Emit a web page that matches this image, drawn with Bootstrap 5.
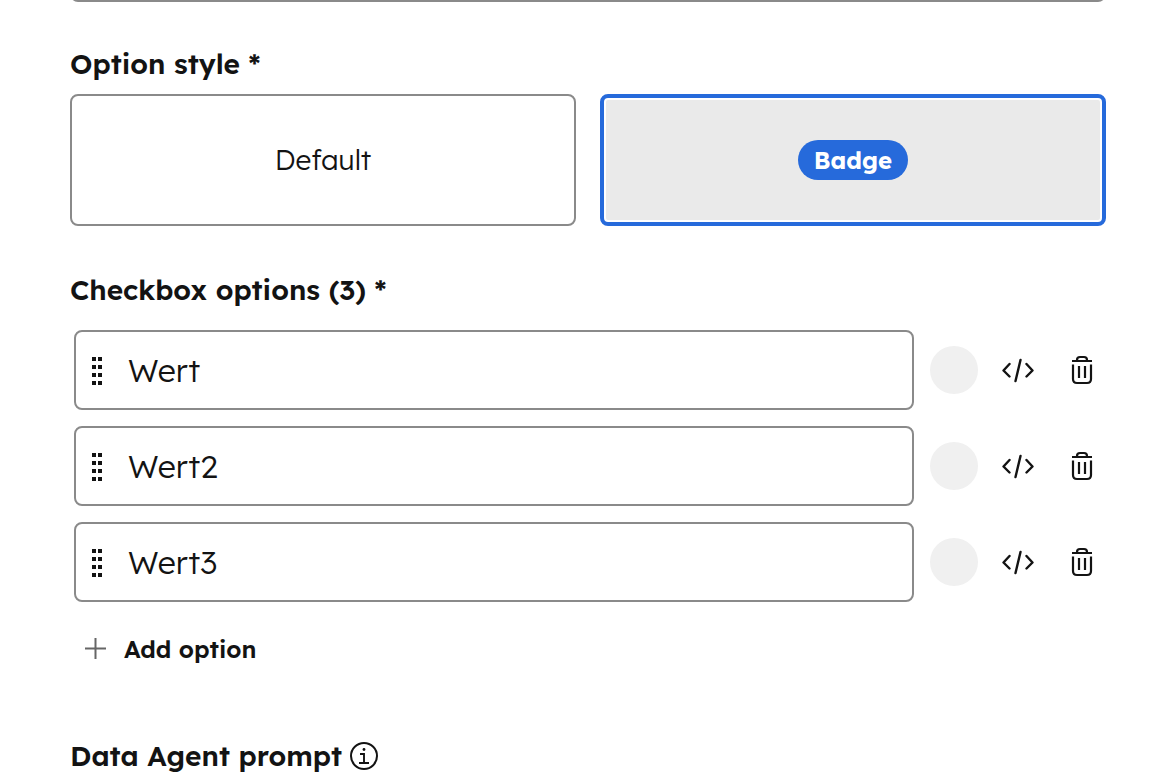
<!DOCTYPE html>
<html lang="en">
<head>
<meta charset="utf-8">
<meta name="viewport" content="width=device-width, initial-scale=1">
<title>Checkbox field settings</title>
<link href="https://cdn.jsdelivr.net/npm/bootstrap@5.3.0/dist/css/bootstrap.min.css" rel="stylesheet">
<style>
  body { font-family: Lexend, Inter, sans-serif; color: #131313; background: #fff; }
  .settings { padding: 0 58px 0 70px; }
  .scrolled-field { height: 2px; }
  .text-field { height: 80px; border: 2px solid #8a8a8a; border-radius: 8px; background: #fff; }
  .field-title { font-size: 28px; line-height: 36px; font-weight: 600; }
  .style-title { margin-top: 44px; margin-bottom: 12px; }
  .choice { height: 132px; border: 2px solid #8a8a8a; border-radius: 8px; font-size: 28px; font-weight: 300; cursor: pointer; }
  .btn-check:checked + .choice { border: 4px solid #266adb; background: #eaeaea; box-shadow: inset 0 0 0 2px #fff; }
  .pill { height: 40px; padding: 0 16px; line-height: 40px; font-size: 24px; font-weight: 700; color: #fff; background: #266adb; }
  .options-title { margin-top: 46px; margin-bottom: 22px; }
  .option-list { padding-left: 4px; }
  .text-field input { font-size: 32px; line-height: 40px; font-weight: 300; color: #131313; outline: 0; }
  .handle { width: 12px; height: 30px; margin: 0 24px 0 16px; }
  .swatch, .tool { width: 48px; height: 48px; }
  .swatch { background: #f0f0f0; }
  .add { margin: 29px 0 0 14px; font-size: 24px; line-height: 36px; font-weight: 600; color: #131313; }
  .prompt-title { margin-top: 71px; }
</style>
</head>
<body>
<svg class="d-none" aria-hidden="true">
  <symbol id="grip" viewBox="0 0 12 30"><path fill="#131313" d="M0 2h4v4H0zM6 2h4v4H6zM0 10h4v4H0zM6 10h4v4H6zM0 18h4v4H0zM6 18h4v4H6zM0 26h4v4H0zM6 26h4v4H6z"/></symbol>
  <symbol id="code" viewBox="0 0 36 28"><path fill="none" stroke="#131313" stroke-width="2.4" stroke-linecap="round" stroke-linejoin="round" d="M9.500 8 3.500 14.500l6 6M26.500 8l6 6.500-6 6M20.500 4 15.500 25"/></symbol>
  <symbol id="trash" viewBox="0 0 24 30"><path fill="none" stroke="#131313" stroke-width="2.200" d="M2 6h20M7 5.500V5q0-3 3-3h4q3 0 3 3v.5M3 9.500v14.500q0 4 4 4h10q4 0 4-4V9.500M9 11v12M15 11v12"/></symbol>
</svg>

<main class="settings">
  <div class="scrolled-field d-flex align-items-end overflow-hidden">
    <div class="text-field w-100 flex-shrink-0"></div>
  </div>

  <h2 class="field-title style-title" id="style-title">Option style *</h2>
  <div class="d-flex gap-4" role="radiogroup" aria-labelledby="style-title">
    <input class="btn-check" type="radio" name="style" id="style-default">
    <label class="choice d-flex flex-fill w-50 align-items-center justify-content-center" for="style-default">Default</label>
    <input class="btn-check" type="radio" name="style" id="style-badge" checked>
    <label class="choice d-flex flex-fill w-50 align-items-center justify-content-center" for="style-badge"><span class="pill rounded-pill">Badge</span></label>
  </div>

  <h2 class="field-title options-title">Checkbox options (3) *</h2>
  <div class="option-list d-flex flex-column gap-3">
    <div class="d-flex align-items-center gap-3">
      <div class="text-field d-flex align-items-center flex-fill">
        <svg class="handle flex-shrink-0" aria-hidden="true"><use href="#grip"/></svg>
        <input class="border-0 bg-transparent p-0 flex-fill" type="text" value="Wert" aria-label="Option 1">
      </div>
      <button class="swatch btn border-0 rounded-circle p-0" type="button" aria-label="Colour"></button>
      <button class="tool btn border-0 p-0 d-flex align-items-center justify-content-center" type="button" aria-label="Edit value"><svg width="36" height="28"><use href="#code"/></svg></button>
      <button class="tool btn border-0 p-0 d-flex align-items-center justify-content-center" type="button" aria-label="Delete"><svg width="24" height="30"><use href="#trash"/></svg></button>
    </div>
    <div class="d-flex align-items-center gap-3">
      <div class="text-field d-flex align-items-center flex-fill">
        <svg class="handle flex-shrink-0" aria-hidden="true"><use href="#grip"/></svg>
        <input class="border-0 bg-transparent p-0 flex-fill" type="text" value="Wert2" aria-label="Option 2">
      </div>
      <button class="swatch btn border-0 rounded-circle p-0" type="button" aria-label="Colour"></button>
      <button class="tool btn border-0 p-0 d-flex align-items-center justify-content-center" type="button" aria-label="Edit value"><svg width="36" height="28"><use href="#code"/></svg></button>
      <button class="tool btn border-0 p-0 d-flex align-items-center justify-content-center" type="button" aria-label="Delete"><svg width="24" height="30"><use href="#trash"/></svg></button>
    </div>
    <div class="d-flex align-items-center gap-3">
      <div class="text-field d-flex align-items-center flex-fill">
        <svg class="handle flex-shrink-0" aria-hidden="true"><use href="#grip"/></svg>
        <input class="border-0 bg-transparent p-0 flex-fill" type="text" value="Wert3" aria-label="Option 3">
      </div>
      <button class="swatch btn border-0 rounded-circle p-0" type="button" aria-label="Colour"></button>
      <button class="tool btn border-0 p-0 d-flex align-items-center justify-content-center" type="button" aria-label="Edit value"><svg width="36" height="28"><use href="#code"/></svg></button>
      <button class="tool btn border-0 p-0 d-flex align-items-center justify-content-center" type="button" aria-label="Delete"><svg width="24" height="30"><use href="#trash"/></svg></button>
    </div>
  </div>

  <button class="add btn border-0 p-0 d-flex align-items-center gap-3" type="button">
    <svg width="24" height="24" viewBox="0 0 24 24" aria-hidden="true"><path stroke="#666" stroke-width="2" d="M1 11.500h21M11.500 1v21"/></svg>
    Add option
  </button>

  <h2 class="field-title prompt-title d-flex align-items-center gap-2 mb-0">Data Agent prompt
    <svg width="28" height="28" viewBox="0 0 28 28" aria-hidden="true"><circle cx="14" cy="14" r="13" fill="none" stroke="#131313" stroke-width="2"/><path fill="none" stroke="#131313" stroke-width="1.900" d="M10 12h4v9M9 21h10"/><circle cx="14" cy="7.500" r="1.400" fill="#131313"/></svg>
  </h2>
</main>
<script src="https://cdn.jsdelivr.net/npm/bootstrap@5.3.0/dist/js/bootstrap.bundle.min.js"></script>
</body>
</html>
